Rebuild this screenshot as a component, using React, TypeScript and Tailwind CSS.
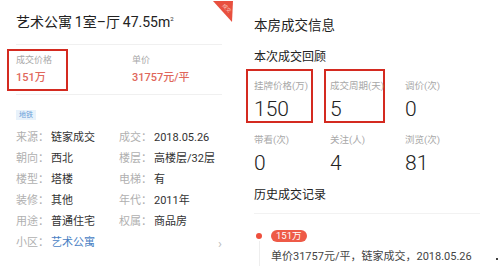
import React from "react";

const font = { fontFamily: 'Roboto, "Noto Sans CJK SC", sans-serif' };

const rows: [string, string, string, string][] = [
  ["来源：", "链家成交", "成交：", "2018.05.26"],
  ["朝向：", "西北", "楼层：", "高楼层/32层"],
  ["楼型：", "塔楼", "电梯：", "有"],
  ["装修：", "其他", "年代：", "2011年"],
  ["用途：", "普通住宅", "权属：", "商品房"],
];

function Stat({ label, value, box }: { label: string; value: string; box?: string }) {
  return (
    <div className={box ? `flex h-[54px] flex-col border-2 border-[#d42a20] ${box}` : "flex h-[54px] w-[67px] flex-col"}>
      <div
        className={
          box
            ? "mt-[8px] whitespace-nowrap text-[9.5px] leading-[14px] text-[#a8a8a8]"
            : "mt-[10px] whitespace-nowrap text-[9.5px] leading-[14px] text-[#a8a8a8]"
        }
      >
        {label}
      </div>
      <div className="mt-[3px] text-[21px] font-light leading-[26px] text-[#222]">{value}</div>
    </div>
  );
}

export default function App() {
  return (
    <div className="flex h-[266px] w-[500px] overflow-hidden bg-white" style={font}>
      {/* left screenshot */}
      <div className="relative w-[250px] pl-[16px]">
        <svg className="absolute left-[213px] top-0" width="21" height="23" viewBox="0 0 21 23">
          <polygon points="0,1 20,1 19,22" fill="#e8503f" />
          <text x="8" y="8" fontSize="5" fill="#f8c9bf" transform="rotate(45 11 8)">成交</text>
        </svg>
        <div className="flex h-[45px] w-[206px] items-center border-b border-[#f0f0f0] pt-[2px]">
          <span className="whitespace-nowrap text-[14px] leading-[20px] text-[#222]">
            艺术公寓{"\u2009"}1室–厅{"\u2009"}47.55m
            <span className="relative -top-[6px] text-[6px]">2</span>
          </span>
        </div>
        <div className="flex h-[50px] w-[206px] items-center border-b border-[#f0f0f0]">
          <div className="-ml-[9px] flex h-[42px] w-[61px] flex-col justify-center border-2 border-[#d42a20] pl-[7px]">
            <div className="text-[9px] leading-[13px] text-[#a8a8a8]">成交价格</div>
            <div className="mt-[3px] text-[11px] font-medium leading-[15px] text-[#e0675b]">151万</div>
          </div>
          <div className="ml-[64px] flex flex-col">
            <div className="text-[9px] leading-[13px] text-[#a8a8a8]">单价</div>
            <div className="mt-[3px] text-[11px] font-medium leading-[15px] text-[#e0675b]">31757元/平</div>
          </div>
        </div>
        <div className="mt-[15px] flex h-[10px] w-[20px] items-center justify-center bg-[#e8f2fb] text-[7px] text-[#6aa0d8]">
          地铁
        </div>
        <div className="mt-[8px] flex flex-col text-[11px]">
          {rows.map((r) => (
            <div key={r[0]} className="flex h-[21px] items-center">
              <span className="w-[35px] text-[#b0b0b0]">{r[0]}</span>
              <span className="w-[68px] text-[#333]">{r[1]}</span>
              <span className="w-[35px] text-[#b0b0b0]">{r[2]}</span>
              <span className="text-[#333]">{r[3]}</span>
            </div>
          ))}
          <div className="flex h-[21px] w-[206px] items-center">
            <span className="w-[35px] text-[#b0b0b0]">小区：</span>
            <span className="flex-1 text-[#4a7fc4]">艺术公寓</span>
            <span className="text-[13px] text-[#bbb]">›</span>
          </div>
        </div>
      </div>

      {/* right screenshot */}
      <div className="relative flex-1 pl-[4px]">
        <div className="flex h-[50px] items-center pt-[1px] text-[13.5px] text-[#222]">本房成交信息</div>
        <div className="flex h-[14px] items-center text-[12px] text-[#222]">本次成交回顾</div>
        <div className="mt-[5px] flex">
          <Stat label="挂牌价格(万)" value="150" box="-ml-[8px] w-[67px] pl-[6px]" />
          <div className="w-[11px]" />
          <Stat label="成交周期(天)" value="5" box="w-[61px] pl-[4px]" />
          <div className="w-[20px]" />
          <Stat label="调价(次)" value="0" />
        </div>
        <div className="flex">
          <div className="w-[76px]"><Stat label="带看(次)" value="0" /></div>
          <div className="w-[75px]"><Stat label="关注(人)" value="4" /></div>
          <Stat label="浏览(次)" value="81" />
        </div>
        <div className="mt-[7px] flex h-[22px] w-[226px] items-center text-[12px] text-[#222]">历史成交记录</div>
        <div className="mt-[7px] h-px w-[226px] bg-[#f2f2f2]" />
        <div className="relative mt-[16px] flex flex-col pl-[17px]">
          <div className="absolute left-[2px] top-[3px] h-[6px] w-[6px] rounded-full bg-[#ee4f3d]" />
          <div className="absolute left-[5px] top-[11px] h-[30px] w-px bg-[#eee]" />
          <div className="flex h-[12px]">
            <div className="flex items-center rounded-full bg-[#ee5a47] px-[5px] text-[9.5px] leading-[12px] text-white">151万</div>
          </div>
          <div className="mt-[8px] h-[14px] whitespace-nowrap text-[11px] leading-[14px] text-[#444]">单价31757元/平，链家成交，2018.05.26</div>
        </div>
        <div className="absolute right-[2px] top-[258px] h-[2px] w-[2px] rounded-full bg-black" />
      </div>
    </div>
  );
}
